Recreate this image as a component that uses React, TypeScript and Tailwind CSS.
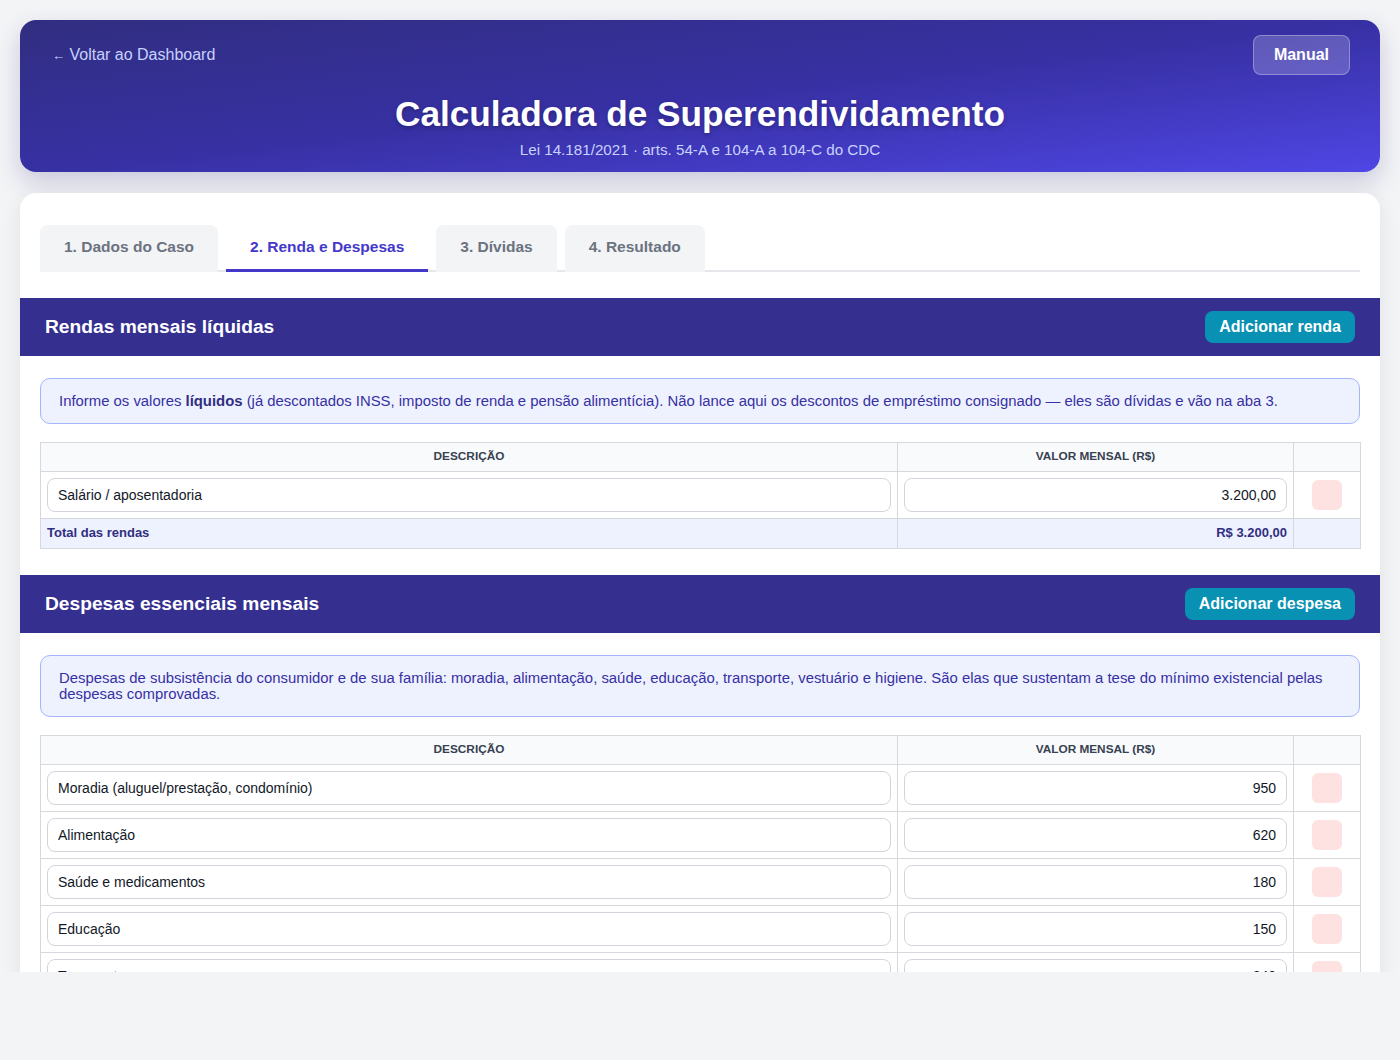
import React from 'react';

const RENDAS = [{ id: 1, descricao: 'Salário / aposentadoria', valor: '3.200,00' }];

const DESPESAS = [
  { id: 1, descricao: 'Moradia (aluguel/prestação, condomínio)', valor: '950' },
  { id: 2, descricao: 'Alimentação', valor: '620' },
  { id: 3, descricao: 'Saúde e medicamentos', valor: '180' },
  { id: 4, descricao: 'Educação', valor: '150' },
  { id: 5, descricao: 'Transporte', valor: '240' },
  { id: 6, descricao: 'Vestuário e higiene', valor: '120' },
  { id: 7, descricao: 'Água, luz e gás', valor: '210' },
];

const TABS = ['1. Dados do Caso', '2. Renda e Despesas', '3. Dívidas', '4. Resultado'];

type Linha = { id: number; descricao: string; valor: string };

function SectionHeader({ title, action }: { title: string; action: string }) {
  return (
    <div className="flex items-center justify-between bg-[#35308f] px-[25px] py-[13px]">
      <h2 className="text-[19.2px] font-bold text-white">{title}</h2>
      <button className="rounded-lg bg-[#0891b2] px-[14px] py-[7px] text-[16px] font-bold text-white">
        {action}
      </button>
    </div>
  );
}

function LinhasTable({ linhas, total }: { linhas: Linha[]; total?: { label: string; valor: string } }) {
  return (
    <table className="w-full table-fixed border-collapse">
      <colgroup>
        <col className="w-[857px]" />
        <col className="w-[396px]" />
        <col className="w-[67px]" />
      </colgroup>
      <thead>
        <tr className="bg-[#f9fafb]">
          <th className="border border-[#d6d8de] py-[7px] text-center text-[11.8px] font-bold uppercase text-[#374151]">Descrição</th>
          <th className="border border-[#d6d8de] py-[7px] text-center text-[11.8px] font-bold uppercase text-[#374151]">Valor mensal (R$)</th>
          <th className="border border-[#d6d8de] py-[7px]"></th>
        </tr>
      </thead>
      <tbody>
        {linhas.map((l) => (
          <tr key={l.id}>
            <td className="border border-[#d6d8de] p-[6px]">
              <input
                readOnly
                value={l.descricao}
                className="h-[34px] w-full rounded-lg border border-[#d1d5db] bg-white px-[10px] text-[14px] text-[#111827] outline-none"
              />
            </td>
            <td className="border border-[#d6d8de] p-[6px]">
              <input
                readOnly
                value={l.valor}
                className="h-[34px] w-full rounded-lg border border-[#d1d5db] bg-white px-[10px] text-right text-[14px] text-[#111827] outline-none"
              />
            </td>
            <td className="border border-[#d6d8de] p-[6px]">
              <button className="mx-auto block h-[30px] w-[30px] rounded-md bg-[#fee2e2]" aria-label="Remover"></button>
            </td>
          </tr>
        ))}
        {total && (
          <tr className="bg-[#eef2ff]">
            <td className="border border-[#d6d8de] px-[6px] py-[7px] text-[13px] font-bold text-[#312e81]">{total.label}</td>
            <td className="border border-[#d6d8de] px-[6px] py-[7px] text-right text-[13px] font-bold text-[#312e81]">{total.valor}</td>
            <td className="border border-[#d6d8de]"></td>
          </tr>
        )}
      </tbody>
    </table>
  );
}

export default function App() {
  return (
    <div className="min-h-screen bg-[#f3f4f6] font-['Liberation_Sans',Arial,sans-serif] leading-[1.15]">
      <div className="h-[972px] overflow-hidden p-5">
        {/* Header */}
        <div className="rounded-2xl bg-linear-to-br from-[#312e81] via-[#3730a3] to-[#4f46e5] px-[30px] pb-[14px] pt-[15px] shadow-[0_10px_25px_rgba(49,46,129,0.22)]">
          <div className="flex items-center justify-between">
            <a className="ml-[2px] text-[16px] text-[#c7d2fe]">
              <span className="text-[13px]">←</span> Voltar ao Dashboard
            </a>
            <button className="rounded-lg border border-white/30 bg-white/20 px-5 py-[10px] text-[16px] font-bold text-white">
              Manual
            </button>
          </div>
          <h1 className="mt-[19px] text-center text-[35.2px] font-bold text-white [text-shadow:0_2px_4px_rgba(0,0,0,0.25)]">
            Calculadora de Superendividamento
          </h1>
          <p className="mt-[6px] text-center text-[15.2px] text-[#c7d2fe]">
            Lei 14.181/2021 · arts. 54-A e 104-A a 104-C do CDC
          </p>
        </div>

        {/* Card */}
        <div className="mt-[21px] rounded-2xl bg-white pt-8 shadow-[0_4px_20px_rgba(0,0,0,0.08)]">
          <div className="mx-5 flex gap-2 border-b-2 border-[#e5e7eb]">
            {TABS.map((tab, i) => (
              <button
                key={tab}
                className={`-mb-[2px] rounded-t-lg border-b-[3px] px-6 py-[12.8px] text-[15.5px] font-bold ${
                  i === 1 ? 'border-[#4338ca] bg-white text-[#4338ca]' : 'border-transparent bg-[#f3f4f6] text-[#6b7280]'
                }`}
              >
                {tab}
              </button>
            ))}
          </div>

          <div className="mt-[26px]">
            <SectionHeader title="Rendas mensais líquidas" action="Adicionar renda" />
            <div className="px-5 pb-[26px] pt-[22px]">
              <div className="mb-[18px] rounded-[10px] border border-[#a5b4fc] bg-[#eef2ff] px-[18px] py-[14px] text-[14.88px] leading-[16px] text-[#3730a3]">
                Informe os valores <strong className="text-[#312e81]">líquidos</strong> (já descontados INSS, imposto de renda e pensão alimentícia). Não lance aqui os descontos de empréstimo consignado — eles são dívidas e vão na aba 3.
              </div>
              <LinhasTable linhas={RENDAS} total={{ label: 'Total das rendas', valor: 'R$ 3.200,00' }} />
            </div>
          </div>

          <div>
            <SectionHeader title="Despesas essenciais mensais" action="Adicionar despesa" />
            <div className="px-5 pb-[26px] pt-[22px]">
              <div className="mb-[18px] rounded-[10px] border border-[#a5b4fc] bg-[#eef2ff] px-[18px] py-[14px] text-[14.88px] leading-[16px] text-[#3730a3]">
                Despesas de subsistência do consumidor e de sua família: moradia, alimentação, saúde, educação, transporte, vestuário e higiene. São elas que sustentam a tese do mínimo existencial pelas despesas comprovadas.
              </div>
              <LinhasTable linhas={DESPESAS} total={{ label: 'Total das despesas', valor: 'R$ 2.470,00' }} />
            </div>
          </div>
        </div>
      </div>
    </div>
  );
}
